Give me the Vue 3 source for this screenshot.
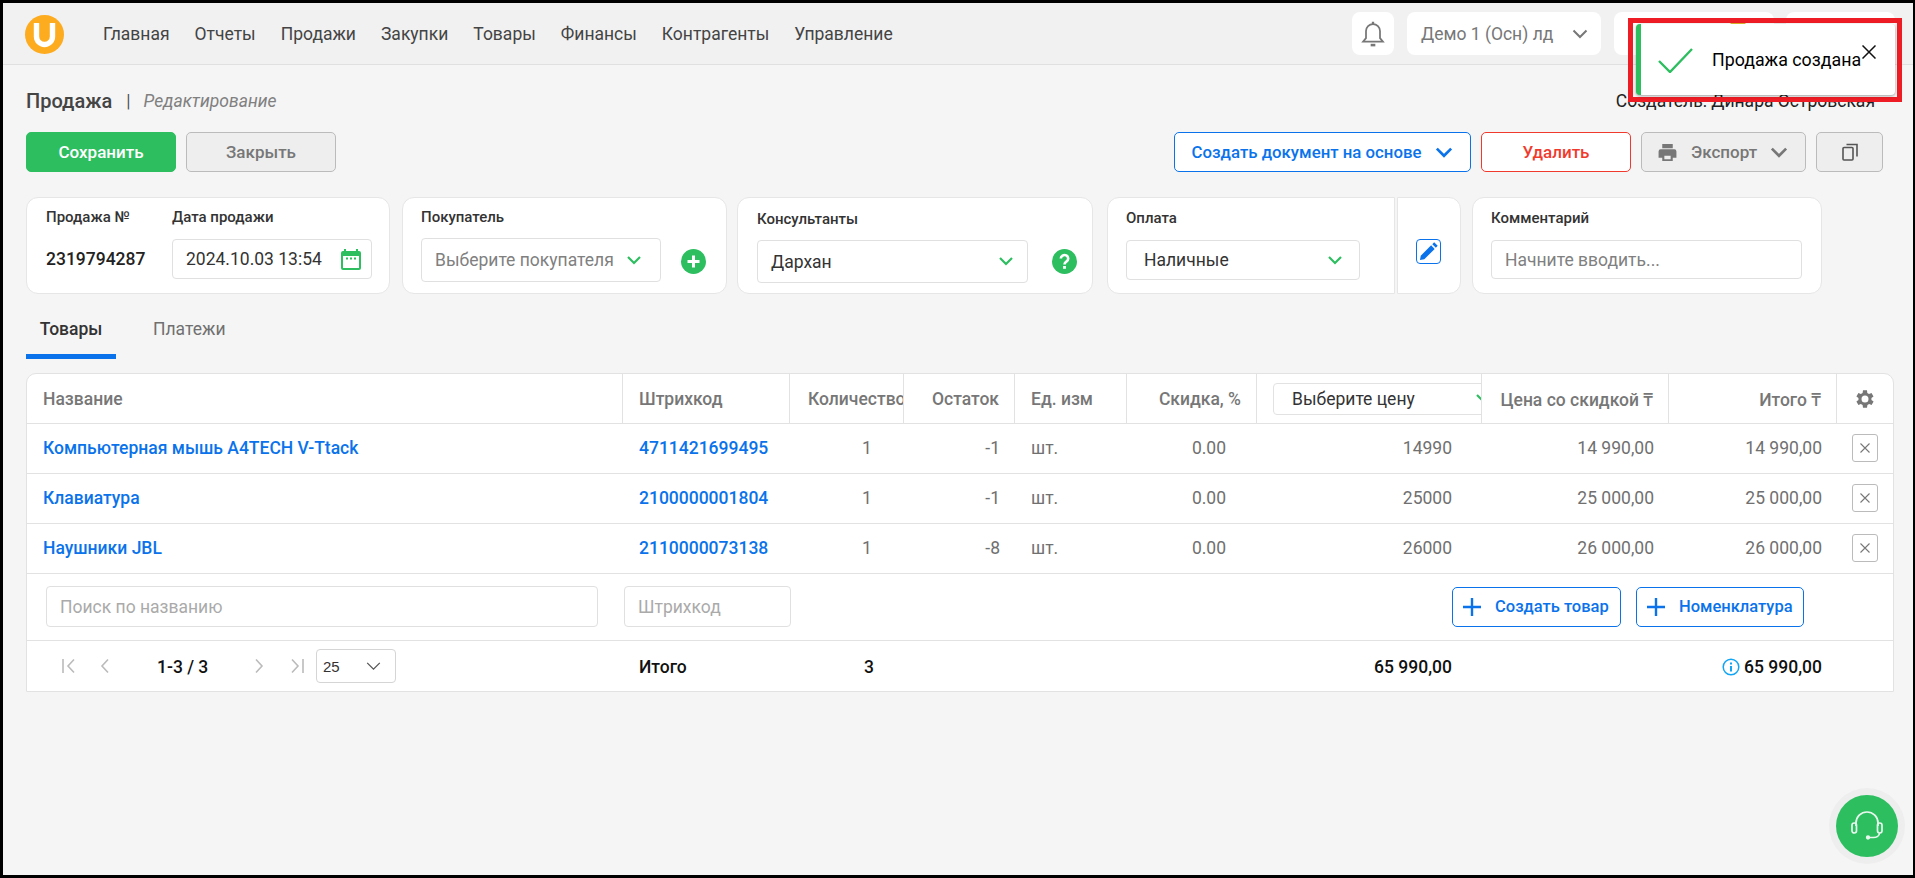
<script setup>
const nav = ['Главная', 'Отчеты', 'Продажи', 'Закупки', 'Товары', 'Финансы', 'Контрагенты', 'Управление']
const rows = [
  { name: 'Компьютерная мышь A4TECH V-Ttack', code: '4711421699495', qty: 1, rest: '-1', price: '14990', sale: '14 990,00', total: '14 990,00' },
  { name: 'Клавиатура', code: '2100000001804', qty: 1, rest: '-1', price: '25000', sale: '25 000,00', total: '25 000,00' },
  { name: 'Наушники JBL', code: '2110000073138', qty: 1, rest: '-8', price: '26000', sale: '26 000,00', total: '26 000,00' },
]
</script>

<template>
  <div class="frame">
    <header class="topbar">
      <svg class="logo" viewBox="0 0 39 39" width="39" height="39">
        <circle cx="19.5" cy="19.5" r="19.5" fill="#fdab1f" />
        <path d="M11.5 8v13.5a8 8 0 0 0 16 0V8" fill="none" stroke="#fff" stroke-width="5.4" />
      </svg>
      <nav class="nav">
        <a v-for="n in nav" :key="n">{{ n }}</a>
      </nav>
      <div class="top-right">
        <div class="tbox bell">
          <svg viewBox="0 0 24 24" width="28" height="28" fill="none" stroke="#777" stroke-width="1.5">
            <path d="M3.500 18.500h17l-2.500-3v-6a6 6 0 0 0-12 0v6z" />
            <path d="M12 1.500v2" stroke-width="2" />
            <path d="M10 21.500h4" stroke-width="2.200" />
          </svg>
        </div>
        <div class="tbox demo">
          <span>Демо 1 (Осн) лд</span>
          <svg viewBox="0 0 16 10" width="16" height="10" fill="none" stroke="#777" stroke-width="2"><path d="M1.500 1.500 8 8l6.500-6.500" /></svg>
        </div>
        <div class="tbox shift"><i class="flag"></i></div>
        <div class="tbox lang">RU</div>
      </div>
    </header>

    <main class="page">
      <div class="title-row">
        <h1>Продажа</h1>
        <span class="sep">|</span>
        <em>Редактирование</em>
        <span class="creator">Создатель: Динара Островская</span>
      </div>

      <div class="actions">
        <button class="btn save">Сохранить</button>
        <button class="btn close">Закрыть</button>
        <div class="spacer"></div>
        <button class="btn create">
          Создать документ на основе
          <svg viewBox="0 0 16 10" width="18" height="11" fill="none" stroke="#0a73eb" stroke-width="2.400"><path d="M1.500 1.500 8 8l6.500-6.500" /></svg>
        </button>
        <button class="btn del">Удалить</button>
        <button class="btn export">
          <svg viewBox="0 0 20 20" width="21" height="21" fill="#777"><path d="M5 2h10v4H5zM3.500 7h13A2 2 0 0 1 18.500 9v6H15v3H5v-3H1.500V9a2 2 0 0 1 2-2zM7 13v3.500h6V13z" /></svg>
          <span>Экспорт</span>
          <svg viewBox="0 0 16 10" width="18" height="11" fill="none" stroke="#777" stroke-width="2.400"><path d="M1.500 1.500 8 8l6.500-6.500" /></svg>
        </button>
        <button class="btn copy">
          <svg viewBox="0 0 16 18" width="16" height="18" fill="none" stroke="#555" stroke-width="1.600"><rect x="1" y="4.500" width="10" height="12.500" rx="1" /><path d="M4.500 1.500H15v12" /></svg>
        </button>
      </div>

      <section class="cards">
        <div class="card c1">
          <div class="c1-col num">
            <label>Продажа №</label>
            <b>2319794287</b>
          </div>
          <div class="c1-col">
            <label>Дата продажи</label>
            <div class="field date">
              <span>2024.10.03 13:54</span>
              <svg viewBox="0 0 20 22" width="20" height="22"><path d="M3 1h2v2h10V1h2v2h1a2 2 0 0 1 2 2v15a2 2 0 0 1-2 2H2a2 2 0 0 1-2-2V5a2 2 0 0 1 2-2h1z" fill="#2dbe60" /><rect x="2" y="8" width="16" height="12" fill="#fff" /><path d="M5 10.500h2M9 10.500h2M13 10.500h2" stroke="#2dbe60" stroke-width="2" /></svg>
            </div>
          </div>
        </div>

        <div class="card c2">
          <label>Покупатель</label>
          <div class="line">
            <div class="field sel buyer">
              <span class="ph nowrap">Выберите покупателя</span>
              <svg class="chev" viewBox="0 0 14 9" width="14" height="9" fill="none" stroke="#2dbe60" stroke-width="2.200"><path d="M1 1l6 6 6-6" /></svg>
            </div>
            <span class="round">
              <svg viewBox="0 0 25 25" width="25" height="25"><circle cx="12.500" cy="12.500" r="12.500" fill="#2dbe60" /><path d="M12.500 6.500v12M6.500 12.500h12" stroke="#fff" stroke-width="3" /></svg>
            </span>
          </div>
        </div>

        <div class="card c3">
          <label>Консультанты</label>
          <div class="line">
            <div class="field sel cons">
              <span>Дархан</span>
              <svg class="chev" viewBox="0 0 14 9" width="14" height="9" fill="none" stroke="#2dbe60" stroke-width="2.200"><path d="M1 1l6 6 6-6" /></svg>
            </div>
            <span class="round">
              <svg viewBox="0 0 25 25" width="25" height="25"><circle cx="12.500" cy="12.500" r="12.500" fill="#2dbe60" /><path d="M8.800 9.500a3.700 3.500 0 1 1 5.800 2.900c-1.300.9-2.100 1.500-2.100 3.100" fill="none" stroke="#fff" stroke-width="2.600" /><rect x="11.100" y="17" width="2.800" height="2.800" fill="#fff" /></svg>
            </span>
          </div>
        </div>

        <div class="card c4">
          <label>Оплата</label>
          <div class="field sel pay">
            <span>Наличные</span>
            <svg class="chev" viewBox="0 0 14 9" width="14" height="9" fill="none" stroke="#2dbe60" stroke-width="2.200"><path d="M1 1l6 6 6-6" /></svg>
          </div>
        </div>

        <div class="card c5">
          <span class="edit">
            <svg viewBox="0 0 16 16" width="21" height="21"><path d="M12.300 1l2.700 2.700-1.400 1.400-2.700-2.700zM10 3.300 12.700 6l-7.900 7.900L1.500 14.500l.6-3.300z" fill="#0a73eb" /></svg>
          </span>
        </div>

        <div class="card c6">
          <label>Комментарий</label>
          <div class="field comment"><span class="ph">Начните вводить...</span></div>
        </div>
      </section>

      <div class="tabs">
        <span class="tab active">Товары</span>
        <span class="tab">Платежи</span>
      </div>

      <section class="table">
        <div class="grid head">
          <div class="cell">Название</div>
          <div class="cell">Штрихкод</div>
          <div class="cell qty-head">Количество</div>
          <div class="cell r">Остаток</div>
          <div class="cell">Ед. изм</div>
          <div class="cell r">Скидка, %</div>
          <div class="cell price-head">
            <div class="price-sel">
              <span>Выберите цену</span>
              <svg viewBox="0 0 14 9" width="14" height="9" fill="none" stroke="#2dbe60" stroke-width="2.200"><path d="M1 1l6 6 6-6" /></svg>
            </div>
          </div>
          <div class="cell r">Цена со скидкой ₸</div>
          <div class="cell r">Итого ₸</div>
          <div class="cell gear">
            <svg viewBox="0 0 24 24" width="24" height="24" fill="#777"><path d="M19.400 13a7.500 7.500 0 0 0 0-2l2.100-1.600-2-3.500-2.500 1a7.500 7.500 0 0 0-1.700-1L15 3.200h-4l-.4 2.700a7.500 7.500 0 0 0-1.700 1l-2.500-1-2 3.500L6.500 11a7.500 7.500 0 0 0 0 2l-2.100 1.600 2 3.500 2.500-1a7.500 7.500 0 0 0 1.700 1l.4 2.700h4l.4-2.700a7.500 7.500 0 0 0 1.700-1l2.500 1 2-3.500zM13 15.500a3.500 3.500 0 1 1 0-7 3.500 3.500 0 0 1 0 7z" transform="translate(-1 0)" /></svg>
          </div>
        </div>

        <div v-for="row in rows" :key="row.code" class="grid row">
          <div class="cell link">{{ row.name }}</div>
          <div class="cell link code">{{ row.code }}</div>
          <div class="cell qty">{{ row.qty }}</div>
          <div class="cell r">{{ row.rest }}</div>
          <div class="cell">шт.</div>
          <div class="cell r disc">0.00</div>
          <div class="cell r price">{{ row.price }}</div>
          <div class="cell r">{{ row.sale }}</div>
          <div class="cell r">{{ row.total }}</div>
          <div class="cell gear">
            <span class="x-btn">
              <svg viewBox="0 0 12 12" width="12" height="12" fill="none" stroke="#777" stroke-width="1.100"><path d="M1.500 1.500l9 9M10.500 1.500l-9 9" /></svg>
            </span>
          </div>
        </div>

        <div class="search-row">
          <div class="field s-name"><span class="ph2">Поиск по названию</span></div>
          <div class="field s-code"><span class="ph2">Штрихкод</span></div>
          <div class="add-btns">
            <button class="btn add">
              <svg viewBox="0 0 18 18" width="18" height="18" fill="none" stroke="#0a73eb" stroke-width="2.400"><path d="M9 0v18M0 9h18" /></svg>
              Создать товар
            </button>
            <button class="btn add">
              <svg viewBox="0 0 18 18" width="18" height="18" fill="none" stroke="#0a73eb" stroke-width="2.400"><path d="M9 0v18M0 9h18" /></svg>
              Номенклатура
            </button>
          </div>
        </div>

        <div class="grid foot">
          <div class="pager">
            <svg class="pg first" viewBox="0 0 14 16" width="14" height="16" fill="none" stroke="#bbb" stroke-width="1.600"><path d="M1 1v14M12 1.500 6 8l6 6.500" /></svg>
            <svg class="pg prev" viewBox="0 0 9 16" width="9" height="16" fill="none" stroke="#bbb" stroke-width="1.600"><path d="M8 1.500 2 8l6 6.500" /></svg>
            <span class="pg-text">1-3 / 3</span>
            <svg class="pg next" viewBox="0 0 9 16" width="9" height="16" fill="none" stroke="#bbb" stroke-width="1.600"><path d="M1 1.500 7 8l-6 6.500" /></svg>
            <svg class="pg last" viewBox="0 0 14 16" width="14" height="16" fill="none" stroke="#bbb" stroke-width="1.600"><path d="M13 1v14M2 1.500 8 8l-6 6.500" /></svg>
            <div class="per-page">
              <span>25</span>
              <svg viewBox="0 0 16 10" width="15" height="9" fill="none" stroke="#555" stroke-width="1.400"><path d="M1 1l7 7 7-7" /></svg>
            </div>
          </div>
          <div class="cell strong">Итого</div>
          <div class="cell qty strong qty-sum">3</div>
          <div class="cell span-sum r strong">65 990,00</div>
          <div class="cell span-total r strong">
            <svg class="info" viewBox="0 0 18 18" width="18" height="18" fill="none" stroke="#11a5f5" stroke-width="1.500"><circle cx="9" cy="9" r="7.800" /><path d="M9 8v5.500M9 4.500v2" stroke-width="2" /></svg>
            65 990,00
          </div>
        </div>
      </section>
    </main>

    <div class="toast-mark">
      <div class="toast">
        <svg class="toast-check" viewBox="0 0 35 25" width="35" height="25" fill="none" stroke="#2dbe60" stroke-width="2.400"><path d="M1 13l11 11L34 1" /></svg>
        <span class="toast-text">Продажа создана</span>
        <svg class="toast-x" viewBox="0 0 14 14" width="14" height="14" fill="none" stroke="#111" stroke-width="1.500"><path d="M.5.500l13 13M13.500.500l-13 13" /></svg>
      </div>
    </div>

    <div class="fab">
      <svg viewBox="0 0 34 30" width="34" height="30" fill="none" stroke="#e9f8ef" stroke-width="1.700">
        <path d="M6 15v-3a11 11 0 0 1 22 0v3" />
        <rect x="2" y="12" width="4.500" height="10" rx="2.200" />
        <rect x="27.500" y="12" width="4.500" height="10" rx="2.200" />
        <path d="M29.500 22c0 3-3 4.500-6 4.500H19" />
        <circle cx="18" cy="26.500" r="1.300" fill="#e9f8ef" />
      </svg>
    </div>
  </div>
</template>

<style>
html, body { margin: 0; background: #000; }
</style>

<style scoped>
.frame {
  position: relative;
  box-sizing: border-box;
  width: 1910px;
  height: 872px;
  margin: 3px 2px 3px 3px;
  background: #f5f5f5;
  overflow: hidden;
  font-family: Roboto, "Noto Sans", sans-serif;
  font-size: 17.5px;
  color: #333;
}
.topbar {
  box-sizing: border-box;
  height: 62px;
  display: flex;
  align-items: center;
  padding: 0 18px 1px 22px;
  background: #f1f1f1;
  border-bottom: 1px solid #e0e0e0;
}
.logo { flex: none; margin-top: 2px; }
.nav { display: flex; gap: 25px; margin-left: 39px; margin-top: 2px; color: #444; }
.top-right { display: flex; margin-left: auto; gap: 13px; height: 43px; margin-top: 1px; }
.tbox {
  background: #fff;
  border-radius: 8px;
  display: flex;
  align-items: center;
  color: #777;
}
.bell { width: 42px; justify-content: center; }
.demo { width: 194px; box-sizing: border-box; padding: 0 13px 0 14px; justify-content: space-between; }
.shift { width: 160px; position: relative; }
.flag { position: absolute; left: 114px; top: 8px; width: 20px; height: 20px; border-radius: 50%; background: #e2b72a; }
.lang { width: 109px; margin-left: -1px; justify-content: center; }

.page { padding: 0 22px 0 23px; }
.title-row {
  height: 67px;
  padding-top: 4px;
  box-sizing: border-box;
  display: flex;
  align-items: center;
}
h1 { margin: 0; font-size: 20px; font-weight: 500; color: #444; }
.sep { margin: 0 13px 0 14px; color: #555; }
em { color: #808080; font-size: 17.5px; }
.creator { margin-left: auto; margin-right: 16px; color: #222; }

.actions { display: flex; gap: 10px; height: 40px; }
.spacer { flex: 1; }
.btn {
  box-sizing: border-box;
  height: 40px;
  border-radius: 5px;
  font: 500 17px Roboto, sans-serif;
  display: flex;
  align-items: center;
  justify-content: center;
  padding: 0;
  border: 1px solid #bbb;
  background: #eee;
  color: #777;
}
.save { width: 150px; background: #2dbe60; border-color: #2dbe60; color: #fff; }
.close { width: 150px; }
.create { width: 297px; background: #fff; border-color: #0a73eb; color: #0a73eb; gap: 14px; font-size: 16.8px; }
.del { width: 150px; background: #fff; border-color: #f03a2e; color: #f03a2e; }
.export { width: 165px; gap: 13px; justify-content: flex-start; padding-left: 15px; }
.copy { width: 67px; margin-right: 8px; }

.cards { display: flex; margin-top: 25px; height: 97px; }
.card {
  box-sizing: border-box;
  background: #fff;
  border: 1px solid #e6e6e6;
  border-radius: 12px;
  height: 97px;
  position: relative;
}
label { display: block; font-size: 15px; font-weight: 500; color: #333; line-height: 18px; }
.field {
  box-sizing: border-box;
  background: #fff;
  border: 1px solid #e0e0e0;
  border-radius: 4px;
  display: flex;
  align-items: center;
}
.ph { color: #808080; }
.nowrap { white-space: nowrap; }
.c1 { width: 364px; display: flex; padding: 10px 0 0 19px; }
.c1-col { display: flex; flex-direction: column; }
.num { width: 126px; }
.num b { font-weight: 500; color: #222; margin-top: 23px; }
.date {
  width: 200px;
  height: 40px;
  margin-top: 13px;
  padding: 0 10px 0 13px;
  justify-content: space-between;
  color: #333;
}
.c2 { width: 325px; margin-left: 12px; padding: 10px 0 0 18px; }
.line { display: flex; align-items: center; margin-top: 12px; }
.round { display: flex; }
.buyer { width: 240px; height: 44px; padding-left: 13px; }
.chev { margin-left: auto; flex: none; }
.buyer .chev { margin-right: 19px; }
.c2 .round { margin-left: 20px; margin-top: 2px; }
.c3 { width: 356px; margin-left: 10px; padding: 12px 0 0 19px; }
.c3 .line { margin-top: 12px; }
.cons { width: 271px; height: 43px; padding: 0 14px 0 13px; }
.c3 .round { margin-left: 24px; }
.c4 { width: 288px; margin-left: 14px; padding: 11px 0 0 18px; border-top-right-radius: 0; border-bottom-right-radius: 0; }
.pay { width: 234px; height: 40px; margin-top: 13px; padding: 0 17px 0 17px; }
.c5 {
  width: 64px;
  margin-left: 2px;
  border-top-left-radius: 0;
  border-bottom-left-radius: 0;
  padding: 41px 0 0 18px;
}
.edit {
  box-sizing: border-box;
  display: flex;
  align-items: center;
  justify-content: center;
  width: 25px;
  height: 25px;
  border: 1px solid #0a73eb;
  border-radius: 4px;
}
.c6 { width: 350px; margin-left: 11px; padding: 11px 0 0 18px; }
.comment { width: 311px; height: 39px; margin-top: 13px; padding-left: 13px; }

.tabs { display: flex; height: 65px; }
.tab { box-sizing: border-box; padding-top: 25px; color: #707070; line-height: 20px; }
.tab:first-child { width: 90px; text-align: center; }
.tab:last-child { margin-left: 37px; }
.active { color: #333; font-weight: 500; border-bottom: 5px solid #0a73eb; position: relative; }

.table {
  box-sizing: border-box;
  width: 1868px;
  margin-top: 14px;
  background: #fff;
  border: 1px solid #e2e2e2;
  border-radius: 10px 10px 0 0;
  overflow: hidden;
}
.grid {
  box-sizing: border-box;
  display: grid;
  grid-template-columns: 596px 167px 114px 111px 112px 130px 225px 187px 168px 56px;
  align-items: stretch;
}
.cell {
  box-sizing: border-box;
  padding: 0 15px 0 16px;
  display: flex;
  align-items: center;
  white-space: nowrap;
  overflow: hidden;
  min-width: 0;
}
.r { justify-content: flex-end; }
.head { height: 50px; border-bottom: 1px solid #e2e2e2; color: #777; font-weight: 500; }
.head .cell { border-right: 1px solid #e2e2e2; }
.head .cell:last-child { border-right: 0; }
.qty-head { padding: 0 0 0 18px; }
.price-head { padding: 0 0 0 16px; background: #fff; }
.price-sel {
  box-sizing: border-box;
  flex: none;
  width: 240px;
  height: 32px;
  border: 1px solid #e2e2e2;
  border-radius: 4px;
  display: flex;
  align-items: center;
  padding: 0 0 0 18px;
  color: #333;
  font-weight: 400;
  gap: 61px;
}
.row { height: 50px; padding-bottom: 1px; border-bottom: 1px solid #e2e2e2; color: #707070; }
.link { color: #0a73eb; font-weight: 500; }
.qty { justify-content: center; padding: 0 0 0 40px; }
.disc { padding-right: 31px; }
.price { padding-right: 30px; }
.gear { justify-content: center; padding: 0; }
.x-btn {
  box-sizing: border-box;
  width: 26px;
  height: 28px;
  border: 1px solid #bbb;
  border-radius: 3px;
  display: flex;
  align-items: center;
  justify-content: center;
}
.search-row {
  box-sizing: border-box;
  height: 67px;
  display: flex;
  align-items: center;
  padding: 0 89px 1px 19px;
  border-bottom: 1px solid #e2e2e2;
}
.s-name { width: 552px; height: 41px; padding-left: 13px; }
.s-code { width: 167px; height: 41px; margin-left: 26px; padding-left: 13px; }
.ph2 { color: #aaa; }
.add-btns { display: flex; gap: 15px; margin-left: auto; }
.add {
  width: 169px;
  background: #fff;
  border-color: #0a73eb;
  color: #0a73eb;
  gap: 14px;
  font-size: 16.5px;
  justify-content: flex-start;
  padding-left: 10px;
}
.add + .add { width: 168px; }
.foot { height: 50px; color: #111; align-items: center; }
.foot .cell { height: 100%; padding-top: 2px; }
.pager { position: relative; height: 34px; }
.pg { position: absolute; top: 9px; }
.first { left: 35px; }
.prev { left: 73px; }
.next { left: 228px; }
.last { left: 263px; }
.pg-text { position: absolute; left: 130px; top: 8px; font-weight: 500; }
.per-page {
  box-sizing: border-box;
  position: absolute;
  left: 289px;
  top: 0;
  width: 80px;
  height: 34px;
  border: 1px solid #d5d5d5;
  border-radius: 4px;
  display: flex;
  align-items: center;
  justify-content: space-between;
  padding: 0 14px 0 6px;
  font-family: "Liberation Sans", sans-serif;
  font-size: 15px;
  color: #333;
}
.strong { font-weight: 500; }
.qty-sum { justify-content: flex-start; padding: 0 0 0 74px; }
.span-sum { grid-column: 4 / span 4; padding-right: 30px; }
.span-total { grid-column: 8 / span 2; justify-content: flex-end; gap: 4px; }
.info { flex: none; }

.toast-mark {
  position: absolute;
  left: 1625px;
  top: 15px;
  box-sizing: border-box;
  width: 274px;
  height: 84px;
  border: 5px solid #ee1c25;
  padding: 1px 2px 2px 3px;
}
.toast {
  position: relative;
  height: 71px;
  background: #fff;
  border-left: 5px solid #2dbe60;
  border-radius: 4px;
  box-shadow: 0 1px 3px rgba(0, 0, 0, 0.35);
}
.toast-check { position: absolute; left: 17px; top: 24px; }
.toast-text { position: absolute; left: 71px; top: 26px; color: #000; font-size: 17.8px; line-height: 20px; white-space: nowrap; }
.toast-x { position: absolute; left: 221px; top: 21px; }

.fab {
  position: absolute;
  left: 1833px;
  top: 792px;
  box-sizing: border-box;
  width: 62px;
  height: 62px;
  background: #2dbe60;
  border-radius: 50%;
  box-shadow: 0 0 0 7px #eee;
  display: flex;
  align-items: center;
  justify-content: center;
}
</style>
